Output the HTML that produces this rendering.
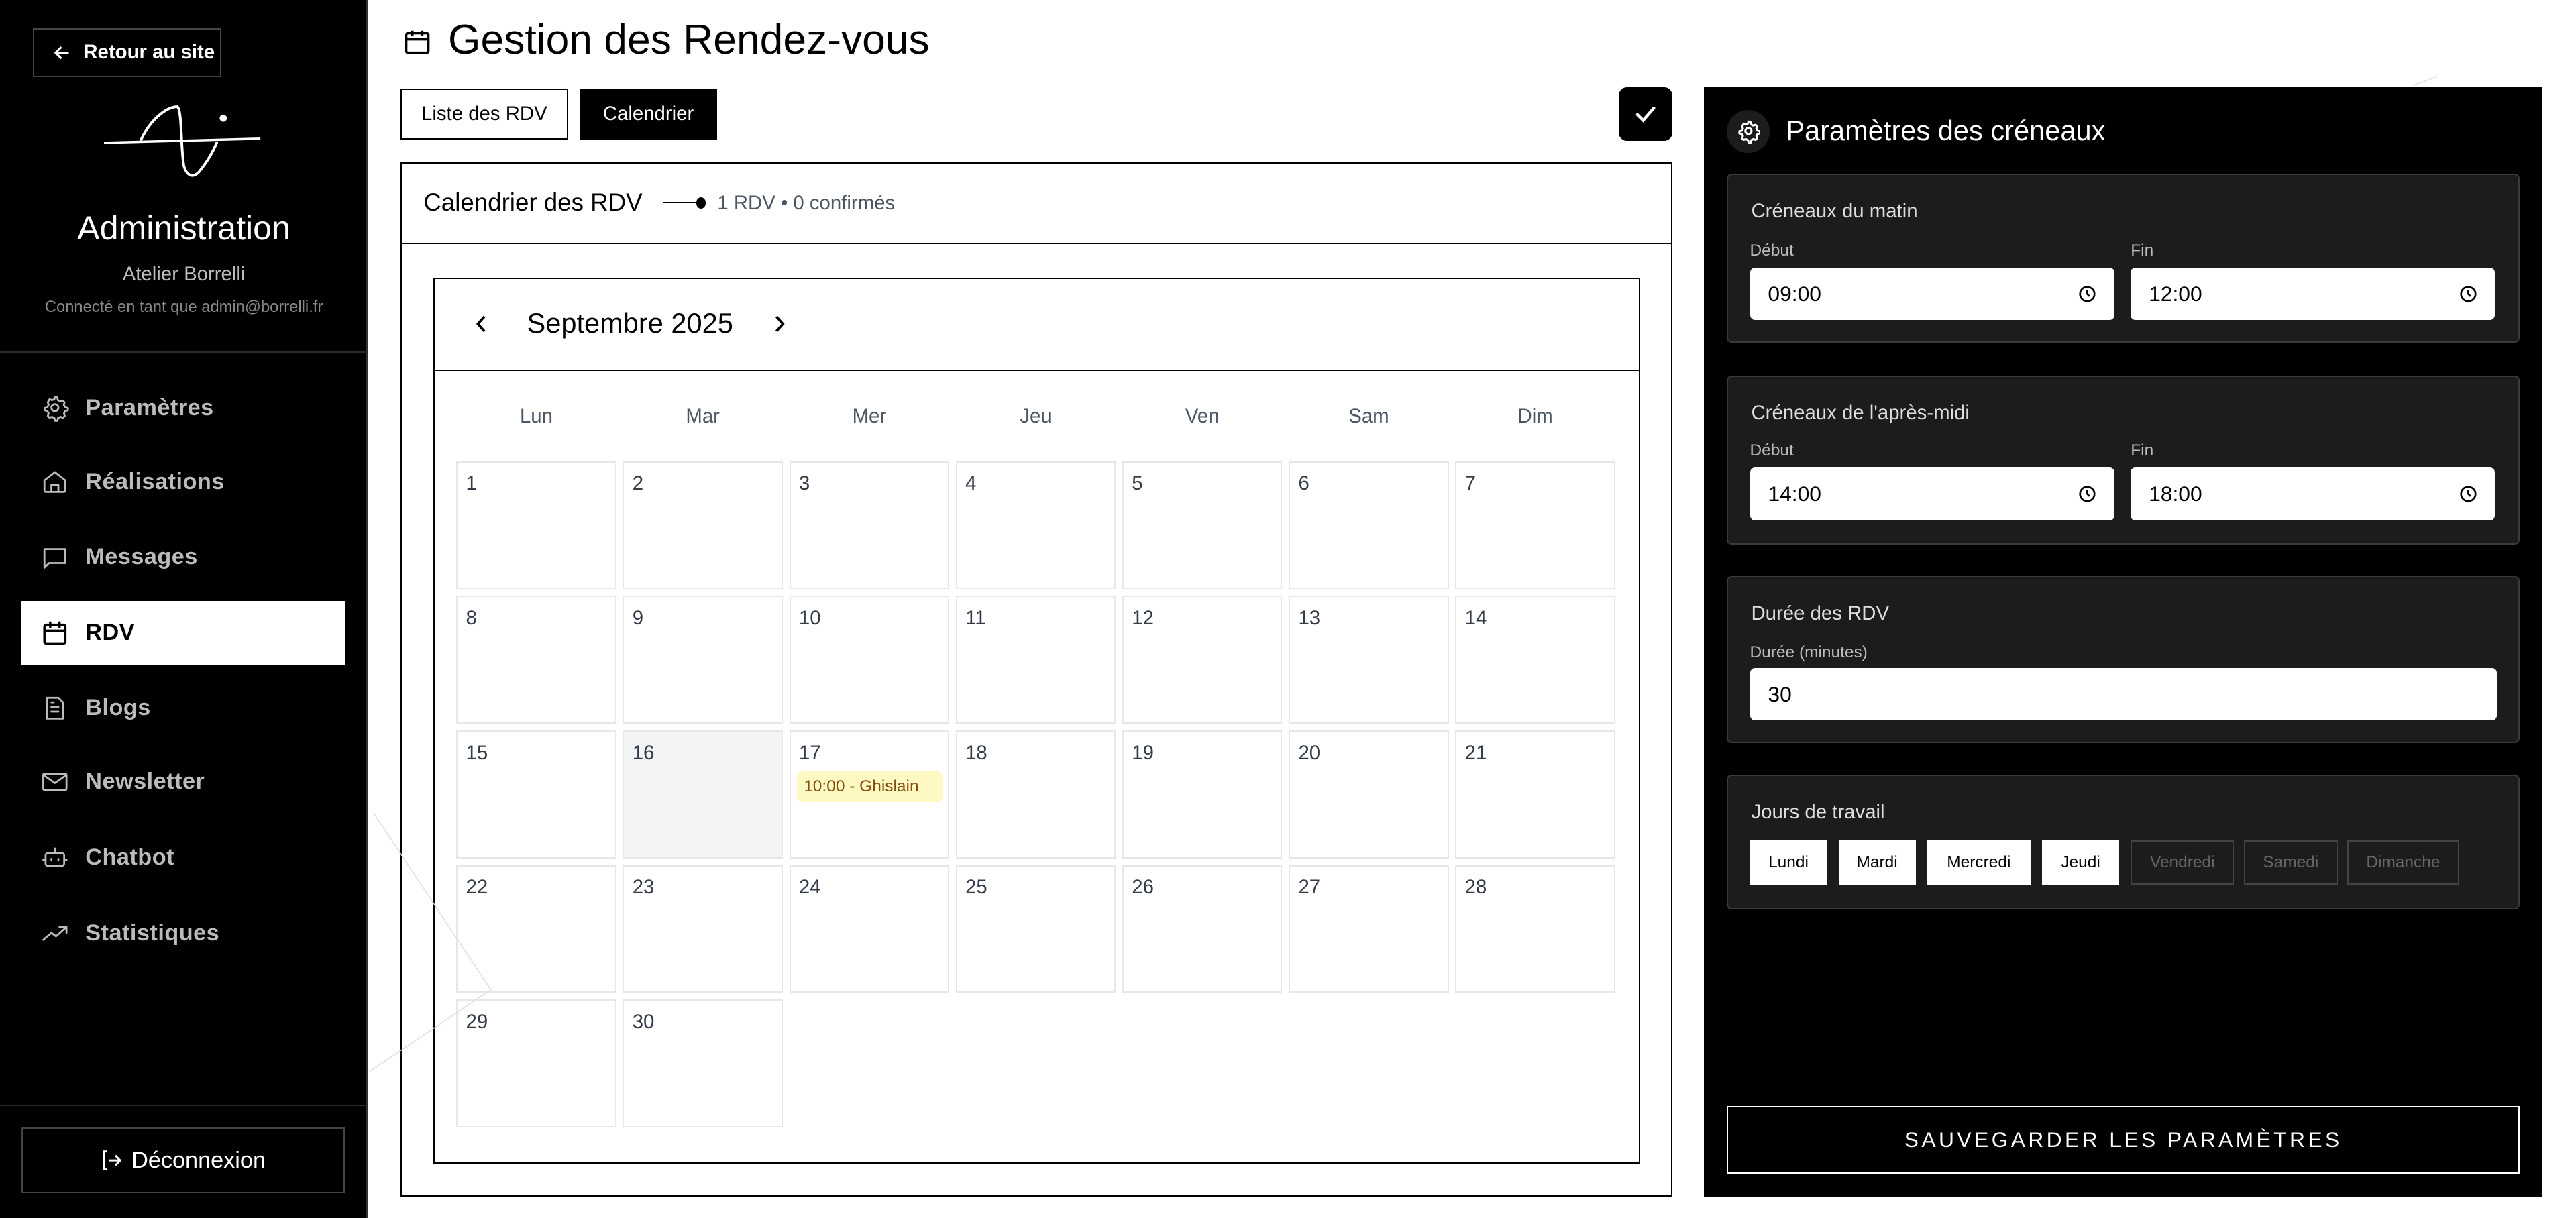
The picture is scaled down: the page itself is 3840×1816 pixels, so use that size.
<!DOCTYPE html>
<html><head><meta charset="utf-8">
<style>
html{zoom:2.447}
*{box-sizing:border-box;margin:0;padding:0}
body{width:1570px;height:742px;overflow:hidden;background:#fff;font-family:"Liberation Sans",sans-serif;position:relative;color:#000}
.abs{position:absolute}
#side{left:0;top:0;width:224px;height:742px;background:#000;border-right:1px solid #333}
.nav{position:absolute;left:13px;width:197px;height:39px;display:flex;align-items:center;padding-left:12px;color:#bbb;font-size:14px;font-weight:bold;letter-spacing:.2px}
.nav svg{width:17px;height:17px;margin-right:10px;fill:none;stroke:currentColor;stroke-width:1.6;stroke-linecap:round;stroke-linejoin:round}
.nav.on{background:#fff;color:#000}
.cell{border:1px solid #e5e7eb;font-size:12px;color:#333a48;padding:6px 0 0 5px;position:relative}
.sec{position:absolute;left:1052px;width:483px;background:#1c1c1c;border:1px solid #3a3a3a;border-radius:3px}
.sec h4{position:absolute;left:14px;font-size:12px;font-weight:normal;color:#ddd}
.lab{position:absolute;font-size:10px;color:#bbb}
.inp{position:absolute;height:32px;background:#fff;border-radius:3px;font-size:13px;color:#000;padding:0 11px;display:flex;align-items:center;justify-content:space-between}
.inp svg{width:11px;height:11px}
.day{position:absolute;top:512px;height:27px;font-size:10px;display:flex;align-items:center;justify-content:center}
.day.a{background:#fff;color:#000}
.day.d{border:1px solid #444;color:#666}
</style></head><body>

<div id="side" class="abs">
  <div class="abs" style="left:20px;top:17px;width:115px;height:30px;border:1px solid #444;color:#fff;font-size:12px;font-weight:bold;display:flex;align-items:center;padding-left:11px">
    <svg width="12" height="12" viewBox="0 0 12 12" style="margin-right:7px"><path d="M10 6H2M5.5 2.5L2 6l3.5 3.5" stroke="#fff" stroke-width="1.3" fill="none"/></svg>Retour au site
  </div>
  <svg class="abs" style="left:0;top:0" width="224" height="120" viewBox="0 0 224 120">
    <path d="M64 87 L158 84.5" stroke="#fff" stroke-width="1.4" fill="none" stroke-linecap="round"/>
    <path d="M86 85 C92 72 102 65 108 65 C111 67 110 90 112 101 C114 108 118 108 121 105 C126 99 130 92 132 87" stroke="#fff" stroke-width="1.6" fill="none" stroke-linecap="round"/>
    <circle cx="136" cy="72" r="2.2" fill="#fff"/>
  </svg>
  <div class="abs" style="left:0;width:224px;top:127px;text-align:center;color:#fff;font-size:20.5px">Administration</div>
  <div class="abs" style="left:0;width:224px;top:160px;text-align:center;color:#bbb;font-size:12px">Atelier Borrelli</div>
  <div class="abs" style="left:0;width:224px;top:182px;text-align:center;color:#888;font-size:9.7px">Connecté en tant que admin@borrelli.fr</div>
  <div class="abs" style="left:0;top:214px;width:224px;border-top:1px solid #2a2a2a"></div>

  <div class="nav" style="top:229px"><svg viewBox="0 0 24 24"><path d="M12 2.8l2 .4.6 2.4 2 1.1 2.3-.8 1.4 1.6-.6 2.3 1.2 1.9 2.3.6v2l-2.3.6-1.1 2 .7 2.3-1.5 1.4-2.3-.7-2 1.1-.5 2.3h-2l-.6-2.3-2-1.1-2.3.7-1.4-1.4.7-2.3-1.1-2-2.3-.6v-2l2.3-.6 1.1-2-.7-2.3L7.4 4.8l2.3.8 2-1.1z"/><circle cx="12" cy="12" r="3"/></svg>Paramètres</div>
  <div class="nav" style="top:274px"><svg viewBox="0 0 24 24"><path d="M3 11l9-7 9 7v9a1 1 0 0 1-1 1H4a1 1 0 0 1-1-1z"/><path d="M9 21v-6h6v6"/></svg>Réalisations</div>
  <div class="nav" style="top:320px"><svg viewBox="0 0 24 24"><path d="M3 5h18v12H7l-4 4z"/></svg>Messages</div>
  <div class="nav on" style="top:366px"><svg viewBox="0 0 24 24" style="stroke-width:2"><rect x="3" y="5" width="18" height="16" rx="1.5"/><path d="M3 10h18M8 3v4M16 3v4"/></svg>RDV</div>
  <div class="nav" style="top:412px"><svg viewBox="0 0 24 24"><path d="M5 3h10l4 4v14H5z"/><path d="M9 11h6M9 15h6M9 7h2"/></svg>Blogs</div>
  <div class="nav" style="top:457px"><svg viewBox="0 0 24 24"><rect x="2" y="5" width="20" height="14" rx="1"/><path d="M2 6l10 7 10-7"/></svg>Newsletter</div>
  <div class="nav" style="top:503px"><svg viewBox="0 0 24 24"><rect x="4" y="8" width="16" height="11" rx="2"/><path d="M12 8V4M2 14h2M20 14h2M9 13v1M15 13v1"/></svg>Chatbot</div>
  <div class="nav" style="top:549px"><svg viewBox="0 0 24 24"><path d="M2 18l7-6 4 3 9-8M16 7h6v5"/></svg>Statistiques</div>

  <div class="abs" style="left:0;top:673px;width:224px;border-top:1px solid #2a2a2a"></div>
  <div class="abs" style="left:13px;top:687px;width:197px;height:40px;border:1px solid #444;color:#fff;font-size:14px;display:flex;align-items:center;justify-content:center">
    <svg width="13" height="14" viewBox="0 0 13 14" style="margin-right:6px"><path d="M4 1.5H2v11h2M5 7h7M9 4l3 3-3 3" stroke="#fff" stroke-width="1.2" fill="none"/></svg>Déconnexion
  </div>
</div>

<!-- header -->
<svg class="abs" style="left:245px;top:16px" width="18" height="19" viewBox="0 0 24 24" fill="none" stroke="#000" stroke-width="2"><rect x="3" y="5" width="18" height="16" rx="1.5"/><path d="M3 10h18M8 3v4M16 3v4"/></svg>
<div class="abs" style="left:273px;top:10px;font-size:25.5px;font-weight:300">Gestion des Rendez-vous</div>
<div class="abs" style="left:244px;top:54px;width:102px;height:31px;border:1px solid #000;font-size:12px;display:flex;align-items:center;justify-content:center">Liste des RDV</div>
<div class="abs" style="left:353px;top:54px;width:84px;height:31px;background:#000;color:#fff;font-size:12px;display:flex;align-items:center;justify-content:center">Calendrier</div>
<div class="abs" style="left:986px;top:53px;width:33px;height:33px;background:#000;border-radius:5px;display:flex;align-items:center;justify-content:center"><svg width="14" height="12" viewBox="0 0 14 12"><path d="M2 6.5l3.5 3.5L12 2.5" stroke="#fff" stroke-width="1.8" fill="none" stroke-linecap="round"/></svg></div>

<!-- calendar card -->
<div class="abs" style="left:244px;top:99px;width:775px;height:630px;border:1px solid #000"></div>
<div class="abs" style="left:244px;top:148px;width:775px;border-top:1px solid #000"></div>
<div class="abs" style="left:258px;top:115px;font-size:15px">Calendrier des RDV</div>
<div class="abs" style="left:404px;top:123px;width:23px;border-top:1px solid #000"></div>
<div class="abs" style="left:424px;top:120px;width:6px;height:7px;border-radius:50%;background:#000"></div>
<div class="abs" style="left:437px;top:117px;font-size:12px;color:#4b5563">1 RDV • 0 confirmés</div>

<div class="abs" style="left:264px;top:169px;width:735px;height:540px;border:1px solid #000"></div>
<div class="abs" style="left:264px;top:225px;width:735px;border-top:1px solid #000"></div>
<svg class="abs" style="left:288px;top:191px" width="10" height="13" viewBox="0 0 10 13"><path d="M7 2L3 6.5 7 11" stroke="#000" stroke-width="1.5" fill="none"/></svg>
<div class="abs" style="left:321px;top:187px;font-size:17px">Septembre 2025</div>
<svg class="abs" style="left:470px;top:191px" width="10" height="13" viewBox="0 0 10 13"><path d="M3 2l4 4.5L3 11" stroke="#000" stroke-width="1.5" fill="none"/></svg>

<div class="abs" style="left:278px;top:247px;width:706px;display:grid;grid-template-columns:repeat(7,1fr);column-gap:4px;font-size:12px;color:#4b5563;text-align:center">
<div>Lun</div><div>Mar</div><div>Mer</div><div>Jeu</div><div>Ven</div><div>Sam</div><div>Dim</div></div>

<div class="abs" style="left:278px;top:281px;width:706px;display:grid;grid-template-columns:repeat(7,1fr);grid-template-rows:repeat(5,78px);gap:4px">
<div class="cell">1</div><div class="cell">2</div><div class="cell">3</div><div class="cell">4</div><div class="cell">5</div><div class="cell">6</div><div class="cell">7</div>
<div class="cell">8</div><div class="cell">9</div><div class="cell">10</div><div class="cell">11</div><div class="cell">12</div><div class="cell">13</div><div class="cell">14</div>
<div class="cell">15</div><div class="cell" style="background:#f3f4f6">16</div><div class="cell">17<div style="position:absolute;left:4px;top:24px;width:89px;height:19px;background:#fef9c3;border-radius:4px;color:#854d0e;font-size:10px;padding:4px 0 0 4px">10:00 - Ghislain</div></div><div class="cell">18</div><div class="cell">19</div><div class="cell">20</div><div class="cell">21</div>
<div class="cell">22</div><div class="cell">23</div><div class="cell">24</div><div class="cell">25</div><div class="cell">26</div><div class="cell">27</div><div class="cell">28</div>
<div class="cell">29</div><div class="cell">30</div>
</div>

<!-- right panel -->
<div class="abs" style="left:1038px;top:53px;width:511px;height:676px;background:#000"></div>
<div class="abs" style="left:1052px;top:67px;width:26px;height:26px;border-radius:50%;background:#1c1c1c;display:flex;align-items:center;justify-content:center">
<svg width="15" height="15" viewBox="0 0 24 24" fill="none" stroke="#fff" stroke-width="2" stroke-linejoin="round"><path d="M12 2.8l2 .4.6 2.4 2 1.1 2.3-.8 1.4 1.6-.6 2.3 1.2 1.9 2.3.6v2l-2.3.6-1.1 2 .7 2.3-1.5 1.4-2.3-.7-2 1.1-.5 2.3h-2l-.6-2.3-2-1.1-2.3.7-1.4-1.4.7-2.3-1.1-2-2.3-.6v-2l2.3-.6 1.1-2-.7-2.3L7.4 4.8l2.3.8 2-1.1z"/><circle cx="12" cy="12" r="3"/></svg></div>
<div class="abs" style="left:1088px;top:70px;font-size:17px;color:#fff;font-weight:300">Paramètres des créneaux</div>

<div class="sec" style="top:106px;height:103px"><h4 style="top:15px">Créneaux du matin</h4></div>
<div class="lab" style="left:1066px;top:147px">Début</div><div class="lab" style="left:1298px;top:147px">Fin</div>
<div class="inp" style="left:1066px;top:163px;width:222px">09:00<svg viewBox="0 0 12 12"><circle cx="6" cy="6" r="4.8" fill="none" stroke="#000" stroke-width="1.2"/><path d="M6 3.5V6l1.5 1.5" stroke="#000" stroke-width="1.2" fill="none"/></svg></div>
<div class="inp" style="left:1298px;top:163px;width:222px">12:00<svg viewBox="0 0 12 12"><circle cx="6" cy="6" r="4.8" fill="none" stroke="#000" stroke-width="1.2"/><path d="M6 3.5V6l1.5 1.5" stroke="#000" stroke-width="1.2" fill="none"/></svg></div>

<div class="sec" style="top:229px;height:103px"><h4 style="top:15px">Créneaux de l'après-midi</h4></div>
<div class="lab" style="left:1066px;top:269px">Début</div><div class="lab" style="left:1298px;top:269px">Fin</div>
<div class="inp" style="left:1066px;top:285px;width:222px">14:00<svg viewBox="0 0 12 12"><circle cx="6" cy="6" r="4.8" fill="none" stroke="#000" stroke-width="1.2"/><path d="M6 3.5V6l1.5 1.5" stroke="#000" stroke-width="1.2" fill="none"/></svg></div>
<div class="inp" style="left:1298px;top:285px;width:222px">18:00<svg viewBox="0 0 12 12"><circle cx="6" cy="6" r="4.8" fill="none" stroke="#000" stroke-width="1.2"/><path d="M6 3.5V6l1.5 1.5" stroke="#000" stroke-width="1.2" fill="none"/></svg></div>

<div class="sec" style="top:351px;height:102px"><h4 style="top:15px">Durée des RDV</h4></div>
<div class="lab" style="left:1066px;top:392px">Durée (minutes)</div>
<div class="inp" style="left:1066px;top:407px;width:455px">30</div>

<div class="sec" style="top:472px;height:82px"><h4 style="top:15px">Jours de travail</h4></div>
<div class="day a" style="left:1066px;width:47px">Lundi</div>
<div class="day a" style="left:1120px;width:47px">Mardi</div>
<div class="day a" style="left:1174px;width:63px">Mercredi</div>
<div class="day a" style="left:1244px;width:47px">Jeudi</div>
<div class="day d" style="left:1298px;width:63px">Vendredi</div>
<div class="day d" style="left:1367px;width:57px">Samedi</div>
<div class="day d" style="left:1430px;width:68px">Dimanche</div>

<div class="abs" style="left:1052px;top:674px;width:483px;height:41px;border:1px solid #fff;color:#fff;font-size:13px;letter-spacing:1.8px;display:flex;align-items:center;justify-content:center">SAUVEGARDER LES PARAMÈTRES</div>

<!-- decorative faint lines -->
<svg class="abs" style="left:0;top:0;pointer-events:none" width="1570" height="742">
<path d="M228 496 L299 603 L225 653" stroke="#ddd" stroke-width=".6" fill="none"/>
<path d="M1470 52 L1484 47" stroke="#ddd" stroke-width=".6" fill="none"/>
</svg>
</body></html>
